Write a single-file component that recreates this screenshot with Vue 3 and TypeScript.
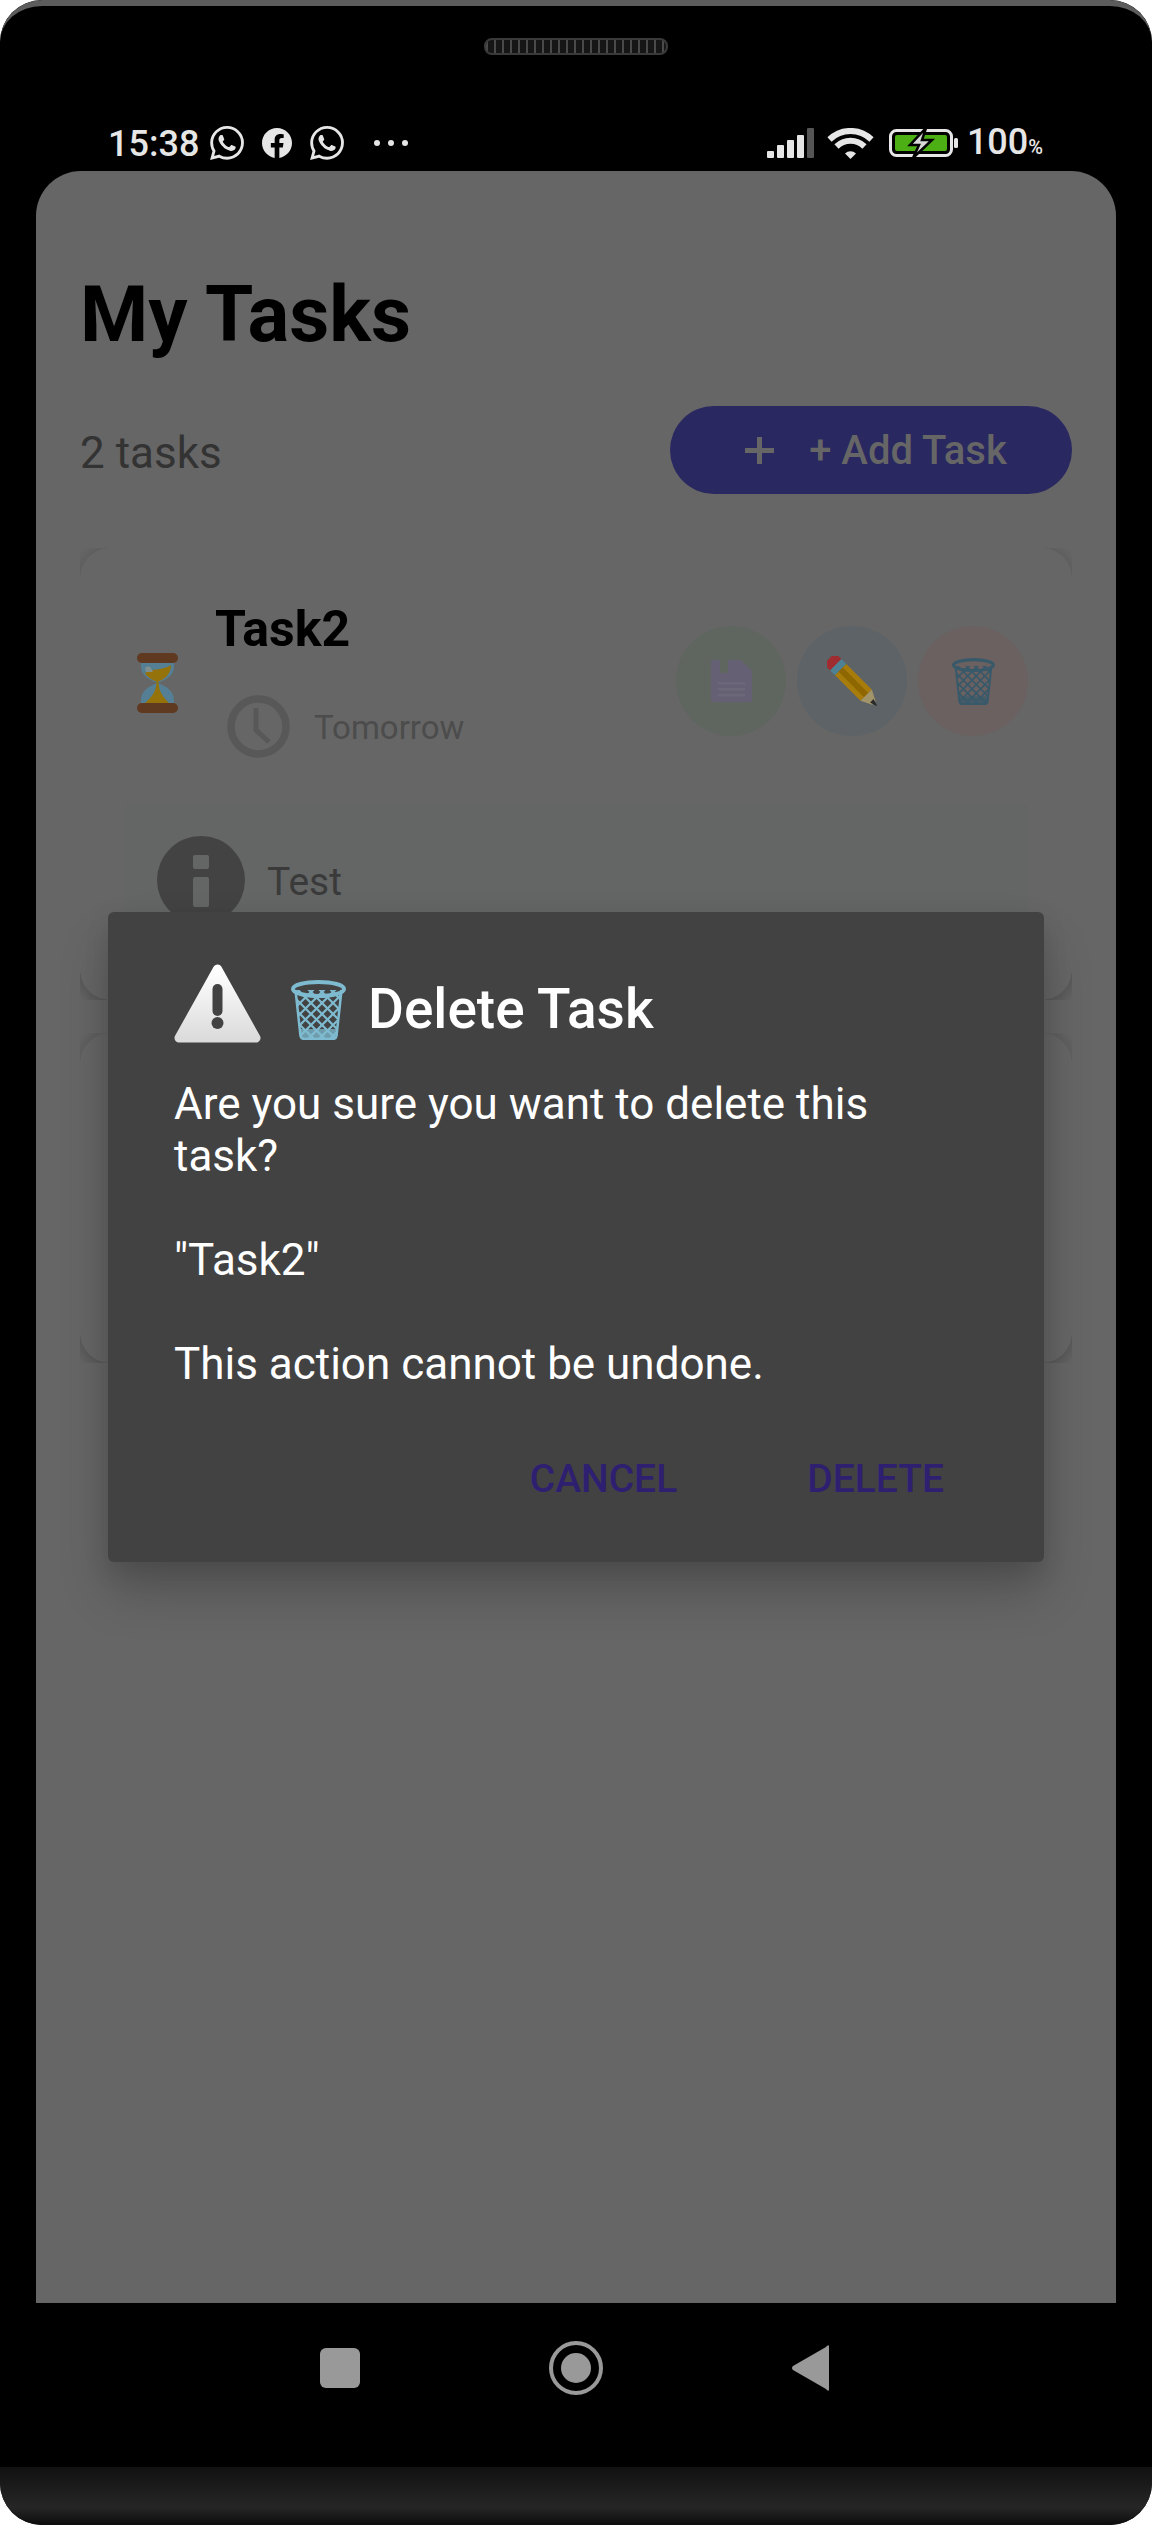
<script setup lang="ts">
const waPath =
  'M17.472 14.382c-.297-.149-1.758-.867-2.03-.967-.273-.099-.471-.148-.67.15-.197.297-.767.966-.94 1.164-.173.199-.347.223-.644.075-.297-.15-1.255-.463-2.39-1.475-.883-.788-1.48-1.761-1.653-2.059-.173-.297-.018-.458.13-.606.134-.133.298-.347.446-.52.149-.174.198-.298.298-.497.099-.198.05-.371-.025-.52-.075-.149-.669-1.612-.916-2.207-.242-.579-.487-.5-.669-.51-.173-.008-.371-.01-.57-.01-.198 0-.52.074-.792.372-.272.297-1.04 1.016-1.04 2.479 0 1.462 1.065 2.875 1.213 3.074.149.198 2.096 3.2 5.077 4.487.709.306 1.262.489 1.694.625.712.227 1.36.195 1.871.118.571-.085 1.758-.719 2.006-1.413.248-.694.248-1.289.173-1.413-.074-.124-.272-.198-.57-.347m-5.421 7.403h-.004a9.87 9.87 0 01-5.031-1.378l-.361-.214-3.741.982.998-3.648-.235-.374a9.86 9.86 0 01-1.51-5.26c.001-5.45 4.436-9.884 9.888-9.884 2.64 0 5.122 1.03 6.988 2.898a9.825 9.825 0 012.893 6.994c-.003 5.45-4.437 9.884-9.885 9.884m8.413-18.297A11.815 11.815 0 0012.05 0C5.495 0 .16 5.335.157 11.892c0 2.096.547 4.142 1.588 5.945L.057 24l6.305-1.654a11.882 11.882 0 005.683 1.448h.005c6.554 0 11.89-5.335 11.893-11.893a11.821 11.821 0 00-3.48-8.413z'
const fbPath =
  'M24 12.073c0-6.627-5.373-12-12-12s-12 5.373-12 12c0 5.99 4.388 10.954 10.125 11.854v-8.385H7.078v-3.47h3.047V9.43c0-3.007 1.792-4.669 4.533-4.669 1.312 0 2.686.235 2.686.235v2.953H15.83c-1.491 0-1.956.925-1.956 1.874v2.25h3.328l-.532 3.47h-2.796v8.385C19.612 23.027 24 18.062 24 12.073z'

const signalBars = [
  { x: 0, h: 7, fill: '#e6e6e6' },
  { x: 10, h: 13, fill: '#e6e6e6' },
  { x: 20, h: 18, fill: '#e6e6e6' },
  { x: 30, h: 23, fill: '#e6e6e6' },
  { x: 40, h: 30, fill: '#555555' },
]

// mesh of the wastebasket emoji
const lattice = Array.from({ length: 9 }, (_, i) => i * 11 - 30)

const message = `Are you sure you want to delete this task?

"Task2"

This action cannot be undone.`
</script>

<template>
  <div class="phone">
    <svg class="defs" width="0" height="0" aria-hidden="true">
      <defs>
        <clipPath id="basket-body">
          <path d="M4 10 L9 56 Q9.5 60 14 60 L41 60 Q45.500 60 46 56 L51 10 Z" />
        </clipPath>
        <linearGradient id="warn-fill" x1="0" y1="0" x2="0" y2="1">
          <stop offset="0" stop-color="#ffffff" />
          <stop offset="1" stop-color="#dcdcdc" />
        </linearGradient>
      </defs>
      <symbol id="basket" viewBox="0 0 55 60">
        <g clip-path="url(#basket-body)" stroke="currentColor" stroke-width="2.2" fill="none">
          <line v-for="o in lattice" :key="`l-${o}`" :x1="o" y1="6" :x2="o + 56" y2="62" />
          <line v-for="o in lattice" :key="`r-${o}`" :x1="o + 56" y1="6" :x2="o" y2="62" />
          <rect x="0" y="49" width="55" height="11" fill="currentColor" stroke="none" opacity="0.75" />
        </g>
        <path d="M4.500 10 L9.500 56 Q10 59 14 59 L41 59 Q45 59 45.500 56 L50.500 10" fill="none" stroke="currentColor" stroke-width="2.500" />
        <ellipse cx="27.500" cy="9" rx="25.500" ry="7" fill="none" stroke="currentColor" stroke-width="4" />
      </symbol>
    </svg>

    <header class="bezel-top">
      <div class="speaker"></div>
      <div class="status">
        <span class="time">15:38</span>
        <svg class="wa" viewBox="0 0 24 24"><path :d="waPath" /></svg>
        <svg class="fb" viewBox="0 0 24 24"><path :d="fbPath" /></svg>
        <svg class="wa wa-second" viewBox="0 0 24 24"><path :d="waPath" /></svg>
        <svg class="dots" width="34" height="6" viewBox="0 0 34 6">
          <circle cx="3" cy="3" r="3" />
          <circle cx="17" cy="3" r="3" />
          <circle cx="31" cy="3" r="3" />
        </svg>
        <svg class="signal" width="47" height="30" viewBox="0 0 47 30">
          <rect v-for="b in signalBars" :key="b.x" :x="b.x" :y="30 - b.h" width="7" :height="b.h" rx="1" :fill="b.fill" />
        </svg>
        <svg class="wifi" width="47" height="31" viewBox="0 0 47 31" fill="none" stroke="#e6e6e6" stroke-width="6">
          <path d="M2.500 11.500 A30 30 0 0 1 44.500 11.500" />
          <path d="M9.500 18.500 A20 20 0 0 1 37.500 18.500" />
          <path d="M18 25.500 L23.500 31 L29 25.500 A8 8 0 0 0 18 25.500 Z" fill="#e6e6e6" stroke="none" />
        </svg>
        <svg class="battery" width="69" height="30" viewBox="0 0 69 30">
          <rect x="1.500" y="2.500" width="61" height="25" rx="6" fill="none" stroke="#e6e6e6" stroke-width="3" />
          <rect x="6" y="7" width="52" height="16" rx="2" fill="#4caf14" />
          <rect x="65" y="10" width="4" height="10" rx="1.500" fill="#e6e6e6" />
          <path d="M37 0 L21 17 L30 17 L24 30 L43 12 L33 12 Z" fill="#d8d8d8" stroke="#000" stroke-width="2.500" />
        </svg>
        <span class="pct">100<small>%</small></span>
      </div>
    </header>

    <main class="screen">
      <h1 class="title">My Tasks</h1>
      <div class="toolbar">
        <span class="count">2 tasks</span>
        <button class="add">
          <svg width="29" height="27" viewBox="0 0 29 27" fill="#666666">
            <rect x="12" y="0" width="5" height="27" />
            <rect x="0" y="11" width="29" height="5" />
          </svg>
          <span>+ Add Task</span>
        </button>
      </div>

      <section class="card">
        <div class="task-row">
          <svg class="hourglass" width="41" height="60" viewBox="0 0 41 60">
            <path d="M4 9 L4 14 C4 22 12 27 20.500 30 C29 27 37 22 37 14 L37 9 Z" fill="#557f94" />
            <path d="M20.500 30 C12 33 4 38 4 47 L4 51 L37 51 L37 47 C37 38 29 33 20.500 30 Z" fill="#557f94" />
            <path d="M8 20 C14 15 26 18 34 12 C34 22 27 26 20.500 29 C15 27 10 24 8 20 Z" fill="#96720a" />
            <path d="M8 15 C10 13 13 13 14 15 L16 19 L9 19 Z" fill="#7f8f8d" />
            <path d="M19.500 29 L21.500 29 C21.500 38 26 44 32 50 L8 50 C15 44 19.500 38 19.500 29 Z" fill="#96720a" />
            <rect x="0" y="0" width="41" height="10" rx="5" fill="#5f3a20" />
            <rect x="0" y="50" width="41" height="10" rx="5" fill="#5f3a20" />
          </svg>
          <div class="task-text">
            <h2 class="task-name">Task2</h2>
            <div class="due">
              <svg width="63" height="63" viewBox="0 0 63 63" fill="none" stroke="#585858">
                <circle cx="31.500" cy="31.500" r="27.500" stroke-width="7.500" />
                <path d="M29 13 L29 35 L42 47" stroke-width="5" />
              </svg>
              <span class="due-label">Tomorrow</span>
            </div>
          </div>
          <div class="actions">
            <button class="round save">
              <svg width="41" height="42" viewBox="0 0 41 42">
                <path d="M2 0 L30 0 L41 11 L41 40 Q41 42 39 42 L2 42 Q0 42 0 40 L0 2 Q0 0 2 0 Z" fill="#656073" />
                <rect x="9" y="0" width="8" height="13" fill="#5f665f" />
                <rect x="7" y="22" width="27" height="2.500" fill="#6c687a" />
                <rect x="7" y="28" width="27" height="2.500" fill="#6c687a" />
                <rect x="7" y="34" width="27" height="2.500" fill="#6c687a" />
              </svg>
            </button>
            <button class="round edit">
              <svg width="50" height="50" viewBox="0 0 50 50">
                <g transform="translate(25 25) rotate(-45)">
                  <path d="M-8 -23 L-8 -27 Q-8 -32 -3 -32 L3 -32 Q8 -32 8 -27 L8 -23 Z" fill="#9e2c30" />
                  <rect x="-8" y="-23" width="16" height="7" fill="#4f8194" />
                  <rect x="-8" y="-16" width="16" height="36" fill="#a77c0b" />
                  <rect x="-3" y="-16" width="6" height="36" fill="#8f6700" />
                  <path d="M-8 20 L8 20 L2.500 31 L-2.500 31 Z" fill="#a3956a" />
                  <path d="M-2.500 28 L2.500 28 L0 36 Z" fill="#2b2b2b" />
                </g>
              </svg>
            </button>
            <button class="round remove">
              <svg class="bin-small" width="43" height="47"><use href="#basket" /></svg>
            </button>
          </div>
        </div>
        <div class="note">
          <svg width="88" height="88" viewBox="0 0 88 88">
            <circle cx="44" cy="44" r="44" fill="#434343" />
            <rect x="36" y="19" width="16" height="14" rx="2" fill="#646665" />
            <rect x="36" y="41" width="16" height="30" rx="2" fill="#646665" />
          </svg>
          <span class="note-text">Test</span>
        </div>
      </section>
      <section class="card card-empty"></section>

      <div class="overlay">
        <div class="dialog" role="alertdialog">
          <div class="dialog-title">
            <svg class="warn" width="87" height="79" viewBox="0 0 87 79">
              <path d="M43.500 5 L82 74 L5 74 Z" fill="url(#warn-fill)" stroke="url(#warn-fill)" stroke-width="9" stroke-linejoin="round" />
              <rect x="38.500" y="20" width="10" height="32" rx="5" fill="#424242" />
              <circle cx="43.500" cy="59" r="6" fill="#424242" />
            </svg>
            <svg class="bin-large" width="55" height="60"><use href="#basket" /></svg>
            <span class="dialog-heading">Delete Task</span>
          </div>
          <p class="message">{{ message }}</p>
          <div class="dialog-actions">
            <button class="text-btn">CANCEL</button>
            <button class="text-btn">DELETE</button>
          </div>
        </div>
      </div>
    </main>

    <footer class="bezel-bottom">
      <nav class="nav">
        <span class="nav-square"></span>
        <svg width="54" height="54" viewBox="0 0 54 54">
          <circle cx="27" cy="27" r="25" fill="none" stroke="#999" stroke-width="4" />
          <circle cx="27" cy="27" r="15" fill="#999" />
        </svg>
        <svg width="37" height="46" viewBox="0 0 37 46">
          <path d="M37 1 L37 45 Q36 47 34 44 L1 25 Q-1 23 1 21 L34 2 Q36 -1 37 1 Z" fill="#999" />
        </svg>
      </nav>
      <div class="chin"></div>
    </footer>
  </div>
</template>

<style scoped>
.phone {
  position: relative;
  display: flex;
  flex-direction: column;
  width: 1152px;
  height: 2525px;
  overflow: hidden;
  background: #000;
  border-radius: 42px;
  font-family: Roboto, "Liberation Sans", sans-serif;
}

.defs {
  position: absolute;
}

.bezel-top {
  flex: none;
  display: flex;
  flex-direction: column;
  align-items: center;
  height: 171px;
  box-sizing: border-box;
  padding-top: 32px;
  background: #000;
  border-top: 6px solid #5c5c5c;
  border-radius: 42px 42px 0 0;
}

.speaker {
  width: 184px;
  height: 17px;
  box-sizing: border-box;
  border-radius: 8px;
  background: repeating-linear-gradient(90deg, #4a4a4a 0 2px, #161616 2px 8px);
  border: 2px solid #3a3a3a;
}

.status {
  display: flex;
  align-items: center;
  align-self: stretch;
  margin-top: 68px;
  padding: 0 109px 0 108px;
  height: 40px;
  color: #e6e6e6;
}

.time,
.pct {
  padding-top: 2px;
  font-size: 36px;
  line-height: 40px;
  font-weight: 500;
}

.pct small {
  font-size: 20px;
}

.status svg {
  fill: #e6e6e6;
  flex: none;
}

.status .signal,
.status .wifi,
.status .battery {
  fill: none;
}

.wa {
  width: 34px;
  height: 34px;
  margin-left: 11px;
}

.wa-second {
  margin-left: 18px;
}

.fb {
  width: 30px;
  height: 30px;
  margin-left: 18px;
}

.dots {
  margin-left: 30px;
}

.signal {
  margin-left: auto;
}

.wifi {
  margin-left: 13px;
}

.battery {
  margin-left: 15px;
}

.pct {
  margin-left: 9px;
}

.screen {
  position: relative;
  flex: 1;
  min-height: 0;
  margin: 0 36px;
  padding: 98px 44px 0 44px;
  background: #666;
  border-radius: 45px 45px 0 0;
}

.title {
  margin: 0;
  font-size: 78px;
  line-height: 92px;
  font-weight: 700;
  color: #000;
}

.toolbar {
  display: flex;
  align-items: center;
  justify-content: space-between;
  margin-top: 45px;
  margin-bottom: 54px;
}

.count {
  padding-top: 5px;
  font-size: 44px;
  color: #333;
}

.add {
  display: flex;
  align-items: center;
  justify-content: center;
  gap: 35px;
  width: 402px;
  height: 88px;
  padding: 0 0 0 10px;
  border: 0;
  border-radius: 44px;
  background: #2a2860;
  color: #666;
  font: 500 40px Roboto, "Liberation Sans", sans-serif;
}

/* the card only shows as a soft crescent at each corner */
.card {
  box-sizing: border-box;
  padding: 44px 44px 44px 45px;
  background:
    radial-gradient(circle at 100% 100%, transparent 29.5px, rgba(0, 0, 0, 0.07) 30px, transparent 40px) 0 0 / 30px 30px no-repeat,
    radial-gradient(circle at 0 100%, transparent 29.5px, rgba(0, 0, 0, 0.07) 30px, transparent 40px) 100% 0 / 30px 30px no-repeat,
    radial-gradient(circle at 100% 0, transparent 29.5px, rgba(0, 0, 0, 0.12) 30px, transparent 42px) 0 100% / 30px 30px no-repeat,
    radial-gradient(circle at 0 0, transparent 29.5px, rgba(0, 0, 0, 0.12) 30px, transparent 42px) 100% 100% / 30px 30px no-repeat;
}

.card-empty {
  height: 330px;
  margin-top: 33px;
}

.task-row {
  display: flex;
  align-items: center;
  height: 178px;
  margin-bottom: 33px;
}

.hourglass {
  flex: none;
  margin: 3px 0 0 12px;
}

.task-text {
  margin-left: 37px;
}

.task-name {
  margin: 0 0 41px;
  font-size: 50px;
  line-height: 50px;
  font-weight: 700;
  color: #000;
}

.due {
  display: flex;
  align-items: center;
  gap: 24px;
  margin-left: 12px;
  font-size: 33px;
  line-height: 42px;
  color: #4c4c4c;
}

.due-label {
  padding-top: 2px;
}

.actions {
  display: flex;
  gap: 11px;
  margin-left: auto;
}

.round {
  display: flex;
  align-items: center;
  justify-content: center;
  width: 110px;
  height: 110px;
  padding: 0;
  border: 0;
  border-radius: 50%;
}

.save {
  background: #5f665f;
}

.edit {
  background: #5d6366;
}

.remove {
  background: #6b6161;
}

.bin-small {
  color: #38596a;
}

.bin-large {
  flex: none;
  color: #7fbbd0;
  margin: 14px 22px 0 30px;
}

.note {
  display: flex;
  align-items: center;
  gap: 22px;
  padding: 33px 32px 32px;
  background: #646665;
  border-radius: 6px;
  font-size: 39px;
  color: #3a3a3a;
}

.note-text {
  padding-top: 3px;
}

.overlay {
  position: absolute;
  inset: 0;
  display: flex;
  align-items: center;
  justify-content: center;
}

.dialog {
  box-sizing: border-box;
  width: 936px;
  height: 650px;
  padding: 51px 72px 0 66px;
  background: #424242;
  border-radius: 6px;
  box-shadow: 0 30px 50px rgba(0, 0, 0, 0.2), 0 10px 25px rgba(0, 0, 0, 0.1);
}

.dialog-title {
  display: flex;
  align-items: center;
  font-size: 55px;
  line-height: 68px;
  font-weight: 500;
  color: #fff;
}

.dialog-heading {
  padding-top: 12px;
}

.message {
  margin: 35px 0 0;
  font-size: 44px;
  line-height: 52px;
  color: #fff;
  white-space: pre-line;
}

.dialog-actions {
  display: flex;
  justify-content: flex-end;
  gap: 130px;
  margin: 66px 28px 0 0;
}

.text-btn {
  padding: 0;
  border: 0;
  background: none;
  color: #2f1f70;
  font: 500 39px/46px Roboto, "Liberation Sans", sans-serif;
}

.bezel-bottom {
  flex: none;
  display: flex;
  flex-direction: column;
  height: 222px;
}

.nav {
  display: flex;
  flex: 1;
  align-items: center;
  justify-content: center;
  gap: 189px;
  padding: 0 3px 34px 0;
}

.nav-square {
  width: 40px;
  height: 40px;
  border-radius: 6px;
  background: #999;
}

.chin {
  height: 58px;
  background: linear-gradient(180deg, #111 0%, #262626 70%, #0c0c0c 100%);
}
</style>

<style>
html,
body {
  background: #fff;
}
</style>
